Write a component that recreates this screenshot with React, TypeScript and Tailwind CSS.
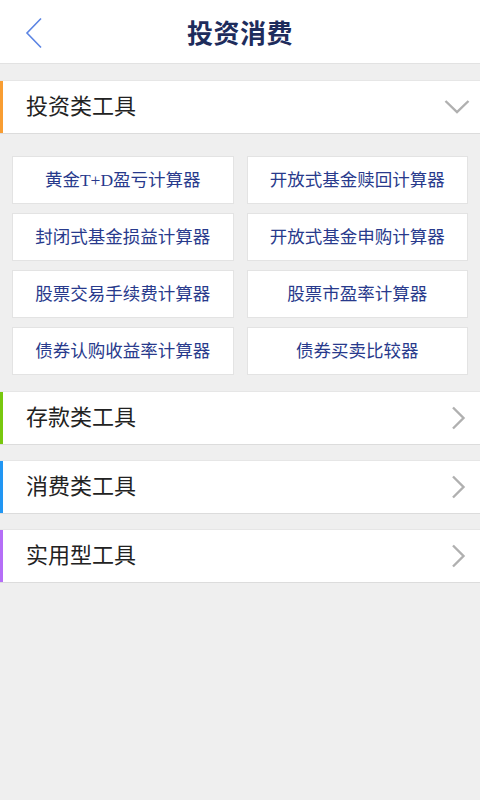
import React from "react";

const tools = [
  "黄金T+D盈亏计算器",
  "开放式基金赎回计算器",
  "封闭式基金损益计算器",
  "开放式基金申购计算器",
  "股票交易手续费计算器",
  "股票市盈率计算器",
  "债券认购收益率计算器",
  "债券买卖比较器",
];

function ChevronRight() {
  return (
    <svg width="16" height="24" viewBox="0 0 16 24" fill="none">
      <path d="M3 1.5 L13.5 12 L3 22.5" stroke="#b0b0b0" strokeWidth="2.4" />
    </svg>
  );
}

function ChevronDown() {
  return (
    <svg width="26" height="16" viewBox="0 0 26 16" fill="none">
      <path d="M1.5 2 L13 13 L24.5 2" stroke="#b0b0b0" strokeWidth="2.4" />
    </svg>
  );
}

function Section({ title, color, down }: { title: string; color: string; down?: boolean }) {
  return (
    <div className="flex h-[54px] items-center bg-white border-b border-[#dcdcdc] border-t border-t-[#e6e6e6]">
      <div className={`h-full w-[3px] ${color}`} />
      <div className="ml-[23px] mb-[5px] flex-1 text-[22px] text-[#222222]">{title}</div>
      <div className={down ? "mr-[10px] flex items-center" : "mr-[14px] flex items-center"}>
        {down ? <ChevronDown /> : <ChevronRight />}
      </div>
    </div>
  );
}

export default function App() {
  return (
    <div
      className="h-[800px] w-[480px] bg-[#efefef]"
      style={{ fontFamily: '"Noto Sans CJK SC", "Noto Sans", sans-serif' }}
    >
      <div className="relative flex h-[64px] items-center justify-center bg-white border-b border-[#e2e2e2]">
        <div className="absolute left-[24px] top-[17px]">
          <svg width="20" height="32" viewBox="0 0 20 32" fill="none">
            <path d="M17 1.5 L3 16 L17 30.5" stroke="#5b84e3" strokeWidth="1.6" />
          </svg>
        </div>
        <div className="text-[26px] font-bold text-[#1e2c5c] tracking-[0.5px]">投资消费</div>
      </div>
      <div className="h-[16px]" />
      <Section title="投资类工具" color="bg-[#f89d32]" down />
      <div className="grid grid-cols-2 gap-x-[13px] gap-y-[9px] px-[12px] pt-[22px] pb-[16px]">
        {tools.map((t) => (
          <div
            key={t}
            className="flex h-[48px] items-center justify-center bg-white border border-[#e3e3e3] text-[17.5px] text-[#283a8c]"
            style={{ fontFamily: '"Liberation Serif", "Noto Sans CJK SC", serif' }}
          >
            {t}
          </div>
        ))}
      </div>
      <Section title="存款类工具" color="bg-[#78c80e]" />
      <div className="h-[15px]" />
      <Section title="消费类工具" color="bg-[#2196f3]" />
      <div className="h-[15px]" />
      <Section title="实用型工具" color="bg-[#b56ef7]" />
    </div>
  );
}
